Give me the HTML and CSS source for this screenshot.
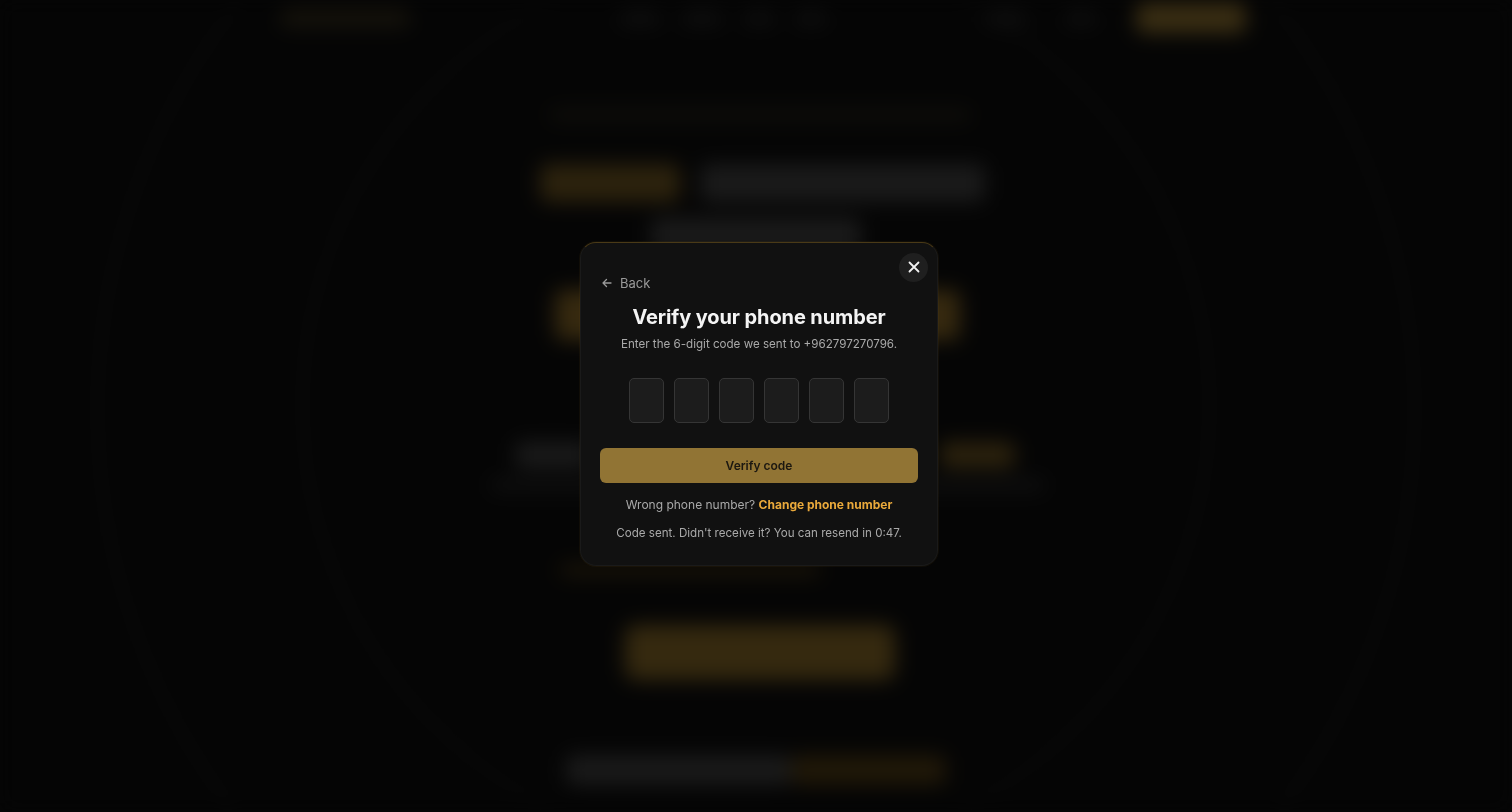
FILE: index.html
```html
<!DOCTYPE html>
<html lang="en">
<head>
  <meta charset="UTF-8">
  <meta name="viewport" content="width=device-width, initial-scale=1.0">
  <title>Verify phone | Sentinel</title>
  <link rel="stylesheet" href="styles.css">
</head>
<body>
  <!-- Landing page behind the dialog, blurred out -->
  <div class="page" aria-hidden="true">
    <div class="ring ring-outer"></div>
    <div class="ring ring-inner"></div>

    <header class="nav">
      <div class="bar logo"></div>
      <div class="nav-links">
        <div class="bar link"></div>
        <div class="bar link"></div>
        <div class="bar link short"></div>
        <div class="bar link short"></div>
      </div>
      <div class="nav-actions">
        <div class="bar link"></div>
        <div class="bar link short"></div>
        <div class="bar nav-cta"></div>
      </div>
    </header>

    <div class="bar eyebrow"></div>
    <div class="hero-line">
      <div class="bar gold heading-gold"></div>
      <div class="bar grey heading-grey"></div>
    </div>
    <div class="bar grey heading-second"></div>
    <div class="bar gold-strong heading-block"></div>
    <div class="stats">
      <div class="bar grey stat"></div>
      <div class="bar gold stat"></div>
    </div>
    <div class="bar hero-sub"></div>
    <div class="bar gold-dim hero-note"></div>
    <div class="bar gold hero-cta"></div>
    <div class="section-title">
      <div class="bar grey title-grey"></div>
      <div class="bar gold-dim title-gold"></div>
    </div>
  </div>

  <!-- Phone verification dialog -->
  <div class="overlay">
    <div class="modal">
      <button class="close-btn" aria-label="Close">
        <svg width="14" height="14" viewBox="0 0 14 14" fill="none" stroke="currentColor" stroke-width="1.8" stroke-linecap="round">
          <path d="M2.5 2.5l9 9M11.5 2.5l-9 9"/>
        </svg>
      </button>

      <a class="back-link">
        <svg width="12" height="12" viewBox="0 0 12 12" fill="none" stroke="currentColor" stroke-width="1.3" stroke-linecap="round" stroke-linejoin="round">
          <path d="M10 6H2M5.5 2.5L2 6l3.5 3.5"/>
        </svg>
        Back
      </a>

      <h3 class="modal-title">Verify your phone number</h3>
      <p class="modal-sub">Enter the 6-digit code we sent to +962797270796.</p>

      <div class="otp">
        <input class="otp-box" maxlength="1" inputmode="numeric">
        <input class="otp-box" maxlength="1" inputmode="numeric">
        <input class="otp-box" maxlength="1" inputmode="numeric">
        <input class="otp-box" maxlength="1" inputmode="numeric">
        <input class="otp-box" maxlength="1" inputmode="numeric">
        <input class="otp-box" maxlength="1" inputmode="numeric">
      </div>

      <button class="verify-btn">Verify code</button>

      <p class="modal-text">Wrong phone number? <a class="change-link">Change phone number</a></p>
      <p class="modal-text resend">Code sent. Didn't receive it? You can resend in 0:47.</p>
    </div>
  </div>
</body>
</html>
```

FILE: styles.css
```css
:root {
  --gold: #eaa93b;
  --gold-muted: #917434;
  --modal-bg: #111111;
  --text-muted: #a9a9a9;
  --page-bg: #050505;
  --font-family: 'Inter', 'Liberation Sans', sans-serif;
}

* {
  margin: 0;
  padding: 0;
  box-sizing: border-box;
}

body {
  font-family: var(--font-family);
  background: var(--page-bg);
  color: #eee;
  height: 100vh;
  overflow: hidden;
}

/* Background page */
.page {
  position: relative;
  height: 100vh;
  overflow: hidden;
  background: var(--page-bg);
  filter: blur(10px);
  display: flex;
  flex-direction: column;
  align-items: center;
}

.ring {
  position: absolute;
  left: 50%;
  border-radius: 50%;
  border: 3px solid #0b0b0b;
}

.ring-outer {
  top: -250px;
  width: 1320px;
  height: 1320px;
  margin-left: -660px;
}

.ring-inner {
  top: -50px;
  width: 910px;
  height: 910px;
  margin-left: -455px;
}

.bar {
  position: relative;
  border-radius: 8px;
  background: #121212;
}

.grey { background: #1a1a1a; }
.gold { background: #2c220d; }
.gold-strong { background: #36290f; }
.gold-dim { background: #201808; }

.nav {
  position: relative;
  width: 966px;
  height: 36px;
  flex-shrink: 0;
  margin-left: 14px;
  display: flex;
  align-items: center;
  justify-content: space-between;
}

.logo {
  width: 130px;
  height: 18px;
  background: #16130b;
}

.nav-links {
  display: flex;
  gap: 22px;
  margin-left: 50px;
}

.link {
  width: 40px;
  height: 12px;
  background: #111111;
}

.link.short {
  width: 30px;
}

.nav-actions {
  display: flex;
  align-items: center;
  gap: 40px;
}

.nav-cta {
  width: 110px;
  height: 30px;
  background: #3a2e13;
}

.eyebrow {
  width: 420px;
  height: 8px;
  flex-shrink: 0;
  margin-top: 75px;
  margin-left: 8px;
  background: #15130c;
}

.hero-line {
  display: flex;
  gap: 20px;
  margin-top: 45px;
  margin-left: 13px;
}

.heading-gold {
  width: 140px;
  height: 38px;
}

.heading-grey {
  width: 285px;
  height: 38px;
}

.heading-second {
  width: 210px;
  height: 34px;
  flex-shrink: 0;
  margin-top: 16px;
}

.heading-block {
  width: 405px;
  height: 50px;
  flex-shrink: 0;
  margin-top: 38px;
  margin-left: 3px;
}

.stats {
  position: relative;
  width: 500px;
  margin-top: 102px;
  margin-left: 18px;
  display: flex;
  justify-content: space-between;
}

.stat {
  width: 75px;
  height: 26px;
}

.hero-sub {
  width: 555px;
  height: 10px;
  flex-shrink: 0;
  margin-top: 12px;
  margin-left: 22px;
}

.hero-note {
  width: 260px;
  height: 10px;
  flex-shrink: 0;
  margin-top: 75px;
  margin-right: 132px;
}

.hero-cta {
  width: 270px;
  height: 55px;
  flex-shrink: 0;
  margin-top: 50px;
  margin-left: 8px;
  border-radius: 10px;
  background: #35290f;
}

.section-title {
  position: relative;
  display: flex;
  margin-top: 75px;
}

.title-grey {
  width: 225px;
  height: 30px;
}

.title-gold {
  width: 155px;
  height: 30px;
}

/* Dialog */
.overlay {
  position: fixed;
  inset: 0;
  display: flex;
  align-items: center;
  justify-content: center;
}

.modal {
  position: relative;
  width: 358px;
  margin-left: 6px;
  margin-top: -5px;
  background: var(--modal-bg);
  border: 1px solid #1a1a1a;
  border-top-color: #4a3a17;
  border-radius: 16px;
  padding: 32px 19px 23px;
  display: flex;
  flex-direction: column;
  align-items: center;
  box-shadow: 0 0 0 1px rgba(120, 90, 30, 0.1);
}

.close-btn {
  position: absolute;
  top: 10px;
  right: 9px;
  width: 29px;
  height: 29px;
  border-radius: 50%;
  border: none;
  background: #1f1f1f;
  color: #f2f2f2;
  display: flex;
  align-items: center;
  justify-content: center;
  cursor: pointer;
}

.back-link {
  align-self: flex-start;
  display: flex;
  align-items: center;
  gap: 7px;
  font-size: 13px;
  line-height: 16px;
  color: #9a9a9a;
  cursor: pointer;
  margin-left: 1px;
}

.modal-title {
  margin-top: 13px;
  font-size: 20px;
  line-height: 26px;
  font-weight: 700;
  color: #f4f4f4;
  letter-spacing: -0.1px;
}

.modal-sub {
  margin-top: 5px;
  font-size: 11.6px;
  line-height: 18px;
  color: var(--text-muted);
}

.otp {
  margin-top: 25px;
  display: flex;
  gap: 10px;
}

.otp-box {
  width: 35px;
  height: 45px;
  background: #1c1c1c;
  border: 1px solid #353535;
  border-radius: 5px;
  outline: none;
  color: #fff;
  text-align: center;
  font: 600 18px var(--font-family);
}

.verify-btn {
  margin-top: 25px;
  width: 100%;
  height: 35px;
  border: none;
  border-radius: 6px;
  background: var(--gold-muted);
  color: #1b1710;
  font: 600 12px var(--font-family);
  cursor: pointer;
}

.modal-text {
  margin-top: 13px;
  font-size: 12px;
  line-height: 18px;
  color: var(--text-muted);
}

.change-link {
  color: var(--gold);
  font-weight: 700;
  cursor: pointer;
}

.resend {
  margin-top: 10px;
  font-size: 11.6px;
}
```
